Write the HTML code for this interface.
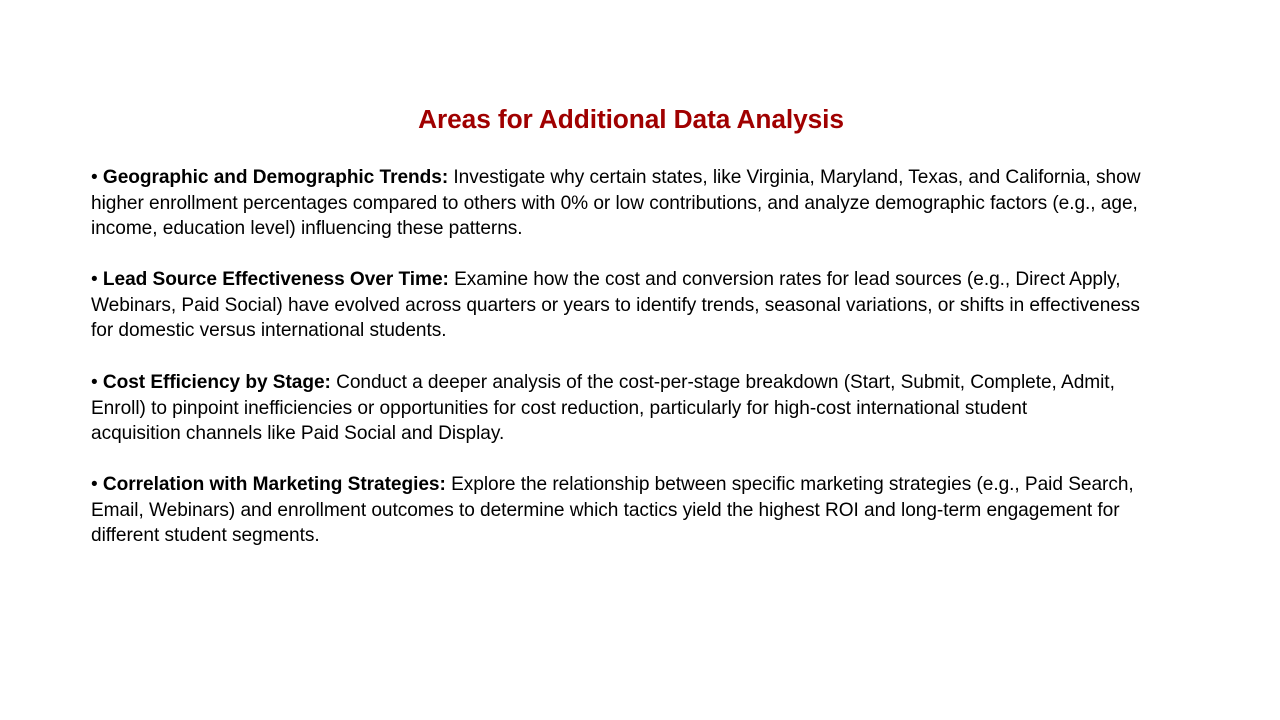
<!DOCTYPE html>
<html><head><meta charset="utf-8"><style>
body{margin:0;width:1280px;height:720px;background:#fff;position:relative;overflow:hidden;font-family:"Liberation Sans",sans-serif;}
h1{position:absolute;top:104px;left:0;width:1262px;text-align:center;margin:0;font-size:26.3px;font-weight:bold;color:#a00000;line-height:30px;letter-spacing:-0.1px;}
.l{position:absolute;left:91px;font-size:19.1px;line-height:24px;color:#000;white-space:nowrap;letter-spacing:-0.05px;}
b{font-weight:bold;}
</style></head><body>
<h1>Areas for Additional Data Analysis</h1>
<div class="l" style="top:166px">• <b>Geographic and Demographic Trends:</b> Investigate why certain states, like Virginia, Maryland, Texas, and California, show</div>
<div class="l" style="top:191.5px">higher enrollment percentages compared to others with 0% or low contributions, and analyze demographic factors (e.g., age,</div>
<div class="l" style="top:217px">income, education level) influencing these patterns.</div>
<div class="l" style="top:268px">• <b>Lead Source Effectiveness Over Time:</b> Examine how the cost and conversion rates for lead sources (e.g., Direct Apply,</div>
<div class="l" style="top:293.5px">Webinars, Paid Social) have evolved across quarters or years to identify trends, seasonal variations, or shifts in effectiveness</div>
<div class="l" style="top:319px">for domestic versus international students.</div>
<div class="l" style="top:371px">• <b>Cost Efficiency by Stage:</b> Conduct a deeper analysis of the cost-per-stage breakdown (Start, Submit, Complete, Admit,</div>
<div class="l" style="top:396.5px">Enroll) to pinpoint inefficiencies or opportunities for cost reduction, particularly for high-cost international student</div>
<div class="l" style="top:422px">acquisition channels like Paid Social and Display.</div>
<div class="l" style="top:473px">• <b>Correlation with Marketing Strategies:</b> Explore the relationship between specific marketing strategies (e.g., Paid Search,</div>
<div class="l" style="top:498.5px">Email, Webinars) and enrollment outcomes to determine which tactics yield the highest ROI and long-term engagement for</div>
<div class="l" style="top:524px">different student segments.</div>
</body></html>
